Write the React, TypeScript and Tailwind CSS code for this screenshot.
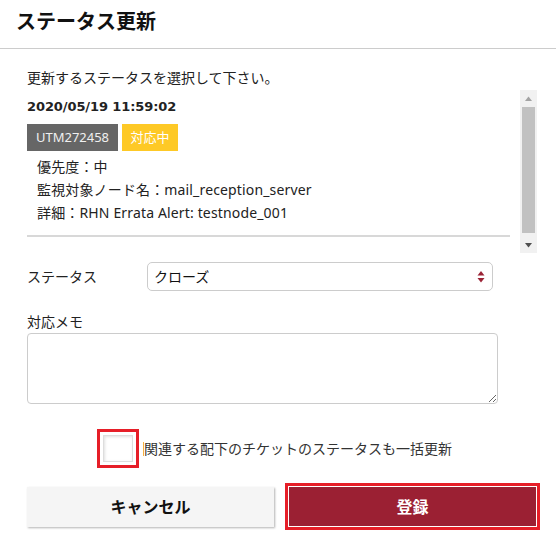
import React from "react";

const font = { fontFamily: '"Noto Sans", "Noto Sans CJK JP", sans-serif' };

export default function App() {
  return (
    <div className="w-[556px] h-[548px] bg-white text-[#222] overflow-hidden" style={font}>
      {/* Header */}
      <div className="h-[49px] border-b border-[#cccccc] pl-[16px] flex items-center">
        <h1 className="text-[20px] font-bold leading-[24px] text-[#111] -mt-[4px]">ステータス更新</h1>
      </div>

      <div className="pl-[27px]">
        <p className="mt-[20px] text-[14px] leading-[18px] text-[#222]">更新するステータスを選択して下さい。</p>

        {/* Scroll area */}
        <div className="mt-[3px] flex h-[163px] w-[510px]">
          <div className="w-[483px] pt-[8px]">
            <div className="text-[13px] font-bold leading-[18px] text-[#222] font-['DejaVu_Sans',sans-serif] tracking-[-0.1px]">2020/05/19 11:59:02</div>
            <div className="mt-[8px] flex gap-[4px]">
              <span className="h-[27px] w-[91px] bg-[#666666] text-[#f0f0f0] text-[13px] flex items-center justify-center">UTM272458</span>
              <span className="h-[27px] w-[56px] bg-[#fec926] text-white text-[13px] flex items-center justify-center">対応中</span>
            </div>
            <div className="mt-[4px] pl-[10px] text-[14px] leading-[23px] text-[#222] tracking-[0.15px]">
              <div>優先度：中</div>
              <div>監視対象ノード名：mail_reception_server</div>
              <div>詳細：RHN Errata Alert: testnode_001</div>
            </div>
            <div className="mt-[11px] h-[2px] bg-[#d8d8d8]" />
          </div>
          <div className="ml-[10px] w-[17px] h-full bg-[#f1f1f1] flex flex-col items-center">
            <svg width="9" height="17" viewBox="0 0 9 17" className="shrink-0">
              <path d="M1 11 L4.5 6.5 L8 11 Z" fill="#a3a3a3" />
            </svg>
            <div className="w-[13px] h-[126px] bg-[#c1c1c1]" />
            <svg width="9" height="20" viewBox="0 0 9 20" className="shrink-0">
              <path d="M1 10 L8 10 L4.5 14.5 Z" fill="#505050" />
            </svg>
          </div>
        </div>

        {/* Status row */}
        <div className="mt-[9px] flex items-center">
          <span className="w-[120px] text-[14px] leading-[18px] text-[#222]">ステータス</span>
          <div className="relative w-[346px] h-[29px] border border-[#cccccc] rounded-[5px] flex items-center pl-[6px] text-[14px] text-[#111]">
            クローズ
            <svg width="8" height="14" viewBox="0 0 8 14" className="absolute right-[7px] top-[7px]">
              <path d="M0.5 5.5 L4 1 L7.5 5.5 Z" fill="#9b2335" />
              <path d="M0.5 8 L7.5 8 L4 12.5 Z" fill="#9b2335" />
            </svg>
          </div>
        </div>

        {/* Memo */}
        <div className="mt-[22px] text-[14px] leading-[18px] text-[#222]">対応メモ</div>
        <textarea className="mt-[2px] block w-[471px] h-[71px] border border-[#cccccc] rounded-[4px] outline-none" />

        {/* Checkbox row */}
        <div className="mt-[25px] ml-[70px] flex items-center">
          <div className="w-[42px] h-[39px] border-[3px] border-[#e61e28] p-[3px] bg-white">
            <div className="w-full h-full border border-[#dddddd] bg-white shadow-[inset_1px_1px_3px_rgba(0,0,0,0.12)]" />
          </div>
          <span className="ml-[4px] w-px h-[14px] bg-[#f5b041]" />
          <span className="text-[14px] leading-[18px] text-[#333]">関連する配下のチケットのステータスも一括更新</span>
        </div>

        {/* Buttons */}
        <div className="mt-[15px] flex items-center">
          <button className="w-[247px] h-[40px] bg-[#f5f5f5] shadow-[1px_1px_2px_rgba(0,0,0,0.3)] text-[16px] font-bold text-[#111]">
            キャンセル
          </button>
          <div className="ml-[11px] w-[255px] h-[47px] border-[3px] border-[#e61e28] p-px bg-white">
            <button className="w-full h-full bg-[#9b2033] text-white text-[16px] font-bold">登録</button>
          </div>
        </div>
      </div>
    </div>
  );
}
